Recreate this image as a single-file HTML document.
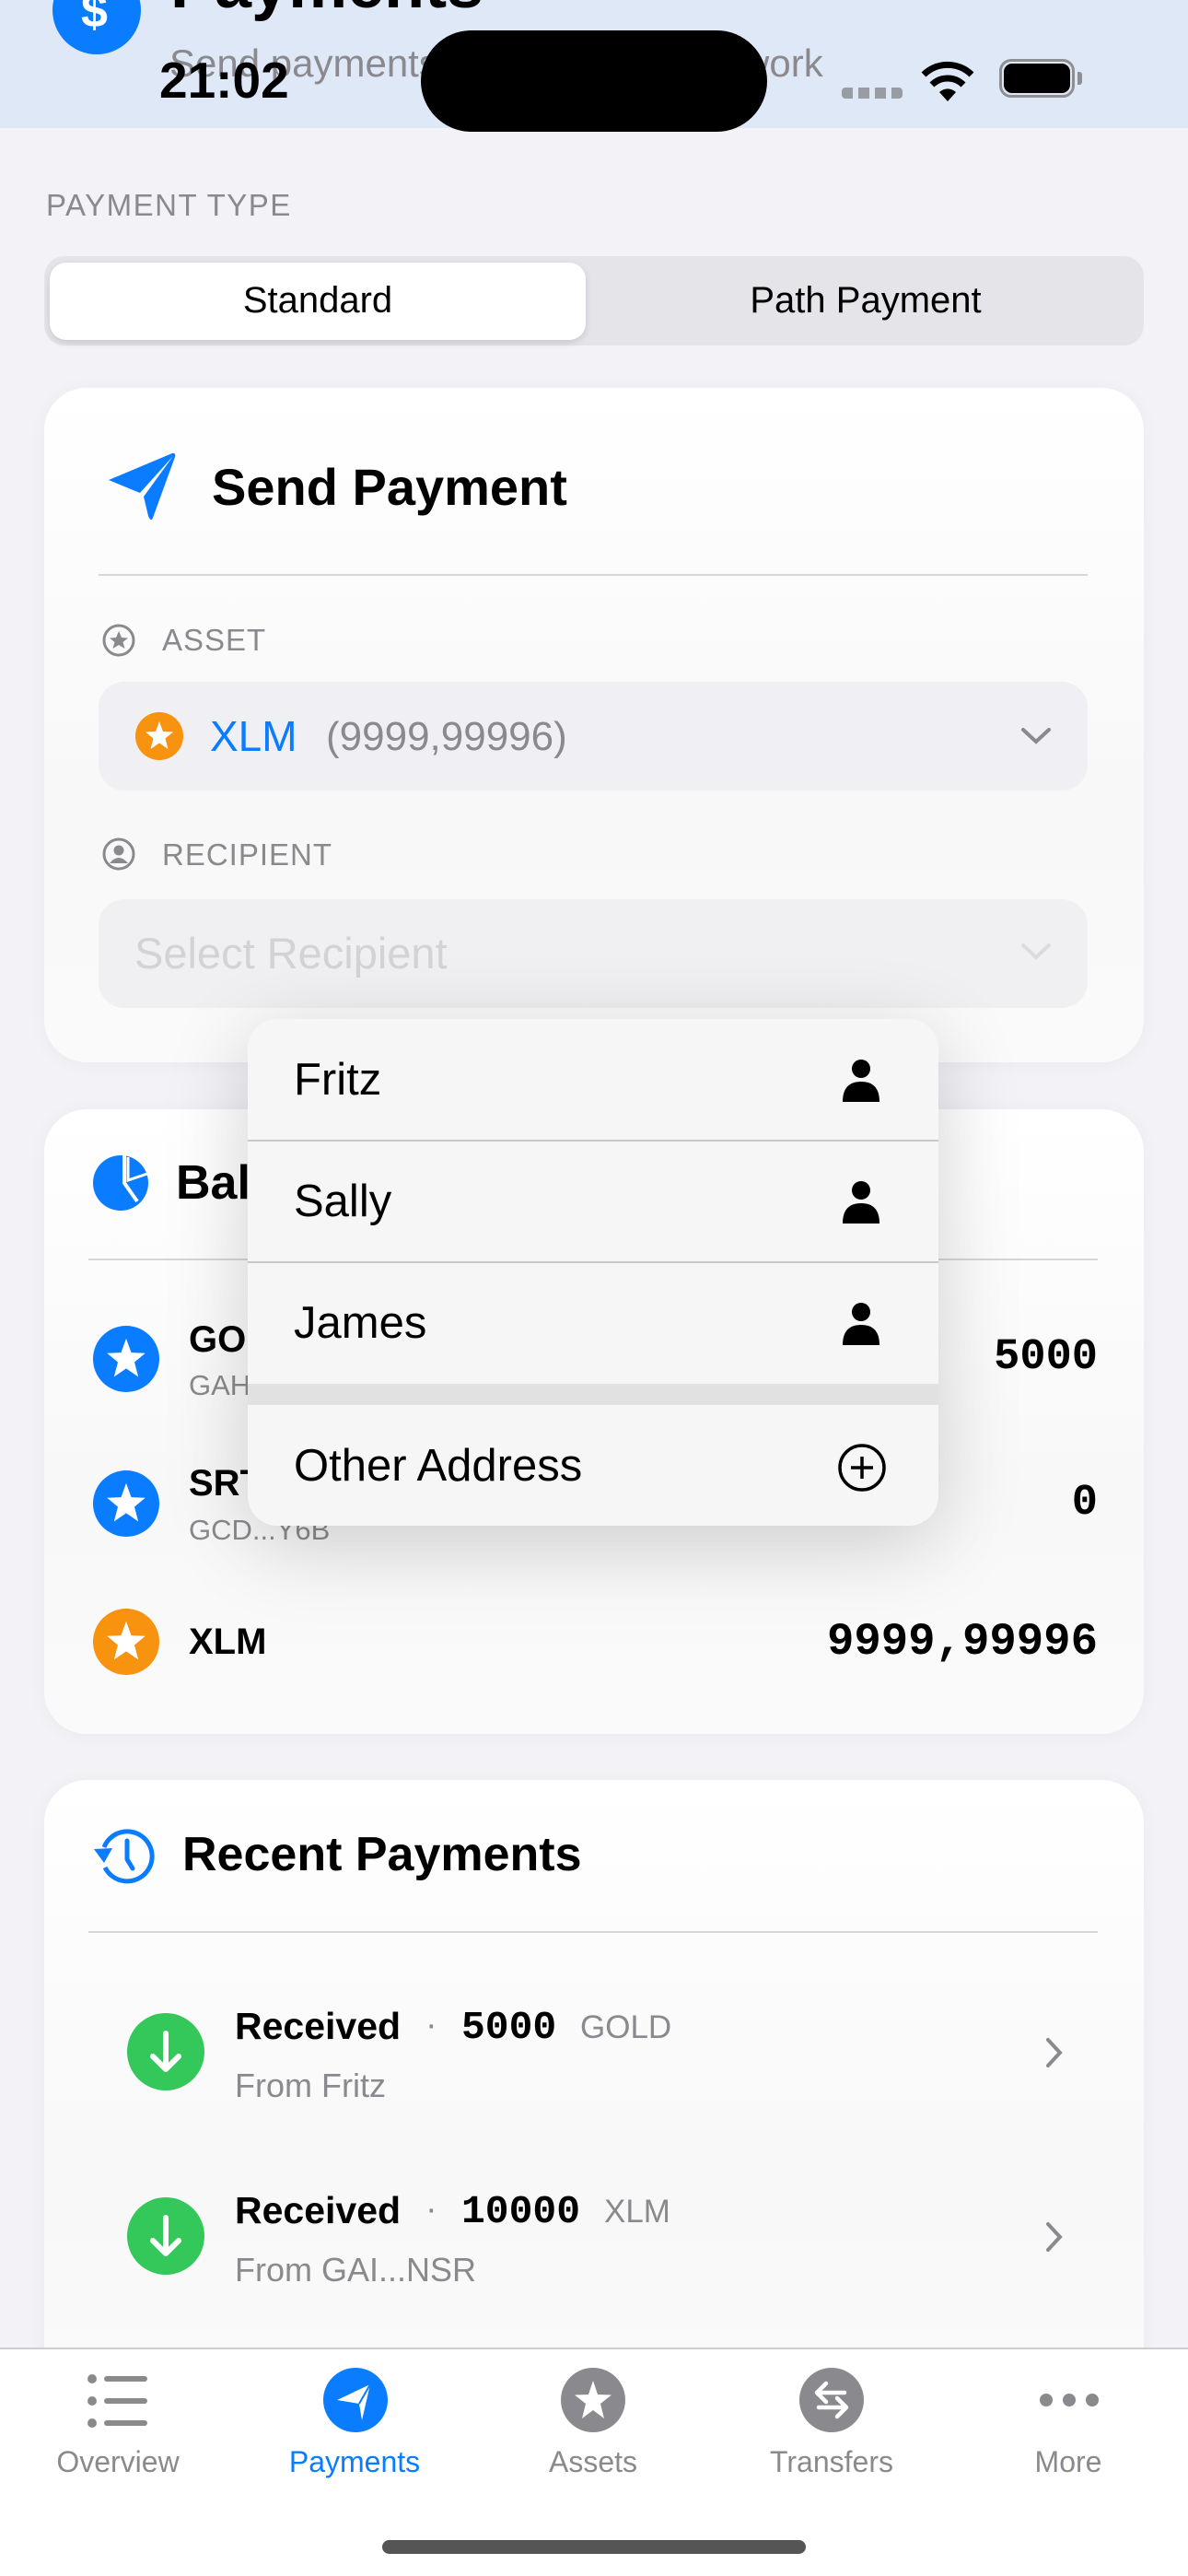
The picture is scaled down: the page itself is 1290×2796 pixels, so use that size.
<!DOCTYPE html>
<html><head><meta charset="utf-8">
<style>
*{margin:0;padding:0;box-sizing:border-box}
body{width:1290px;height:2796px;background:#f2f2f7;font-family:"Liberation Sans",sans-serif;position:relative;overflow:hidden;color:#000}
.a{position:absolute}
.card{position:absolute;left:48px;width:1194px;background:linear-gradient(180deg,#fff,#f8f8f8 60%,#fafafa);border-radius:46px;box-shadow:0 2px 20px rgba(0,0,0,.04)}
.lbl{color:#8a8a8e;font-size:33px;letter-spacing:1px}
.mono{font-family:"Liberation Mono",monospace;font-weight:bold}
.gray{color:#8a8a8e}
.div{position:absolute;height:2px;background:#d6d6d8}
.t{white-space:nowrap;line-height:1}
</style></head><body>

<!-- header -->
<div class="a" style="left:0;top:0;width:1290px;height:139px;background:#dfe8f7"></div>
<div class="a" style="left:57px;top:-37px;width:96px;height:96px;border-radius:50%;background:#0a7cff"></div>
<div class="a t" style="left:88px;top:-14px;color:#fff;font-size:52px;font-weight:bold">$</div>
<div class="a t" style="left:185px;top:-52px;font-size:72px;font-weight:bold">Payments</div>
<div class="a t" style="left:184px;top:48px;font-size:42px;color:#8a8a8e">Send payments on the Stellar network</div>
<div class="a t" style="left:173px;top:60px;font-size:55px;font-weight:bold">21:02</div>
<div class="a" style="left:457px;top:33px;width:376px;height:110px;border-radius:55px;background:#000"></div>
<div class="a" style="left:914px;top:95px;width:66px;height:12px;background:repeating-linear-gradient(90deg,#9a9ca4 0 12px,transparent 12px 18px);border-radius:4px"></div>
<svg class="a" style="left:1000px;top:64px" width="58" height="46" viewBox="0 0 58 46"><path d="M29 46 L20 36 A13 13 0 0 1 38 36 Z" fill="#000"/><path d="M12 28 A24 24 0 0 1 46 28" stroke="#000" stroke-width="7" fill="none"/><path d="M3 17 A37 37 0 0 1 55 17" stroke="#000" stroke-width="7" fill="none"/></svg>
<div class="a" style="left:1085px;top:64px;width:82px;height:42px;border:3px solid #8e8e93;border-radius:13px"></div>
<div class="a" style="left:1090px;top:69px;width:72px;height:32px;background:#000;border-radius:9px"></div>
<div class="a" style="left:1170px;top:78px;width:5px;height:14px;background:#8e8e93;border-radius:0 3px 3px 0"></div>

<div class="a t lbl" style="left:50px;top:206px;letter-spacing:1.5px">PAYMENT TYPE</div>
<div class="a" style="left:48px;top:278px;width:1194px;height:97px;background:#e4e4e9;border-radius:22px"></div>
<div class="a" style="left:54px;top:285px;width:582px;height:84px;background:#fff;border-radius:18px;box-shadow:0 3px 8px rgba(0,0,0,.12)"></div>
<div class="a t" style="left:54px;top:306px;width:582px;text-align:center;font-size:40px">Standard</div>
<div class="a t" style="left:640px;top:306px;width:600px;text-align:center;font-size:40px">Path Payment</div>

<!-- card 1 -->
<div class="card" style="top:421px;height:732px"></div>
<svg class="a" style="left:114px;top:490px" width="80" height="76" viewBox="0 0 80 76"><path d="M4 31 L73 2 Q77 1 76 6 L52 72 Q50 77 47 70 L42 49 L74 5 L38 45 Z" fill="#0a7cff"/></svg>
<div class="a t" style="left:230px;top:501px;font-size:56px;font-weight:bold">Send Payment</div>
<div class="div" style="left:107px;top:623px;width:1074px"></div>
<svg class="a" style="left:110px;top:676px" width="38" height="38" viewBox="0 0 38 38"><circle cx="19" cy="19" r="16" stroke="#8a8a8e" stroke-width="3" fill="none"/><path d="M19 9 L22 16 L29 16.5 L23.5 21 L25.5 28 L19 24 L12.5 28 L14.5 21 L9 16.5 L16 16 Z" fill="#8a8a8e"/></svg>
<div class="a t lbl" style="left:176px;top:678px">ASSET</div>
<div class="a" style="left:107px;top:740px;width:1074px;height:118px;background:#efeff4;border-radius:28px"></div>
<svg class="a" style="left:147px;top:773px" width="52" height="52" viewBox="0 0 52 52"><circle cx="26" cy="26" r="26" fill="#f7930e"/><path d="M26 10 L30 21 L41 21.5 L32.5 28.5 L35.5 40 L26 33.5 L16.5 40 L19.5 28.5 L11 21.5 L22 21 Z" fill="#fff"/></svg>
<div class="a t" style="left:228px;top:776px;font-size:46px;color:#0a7cff">XLM</div>
<div class="a t" style="left:354px;top:778px;font-size:44px;color:#8a8a8e">(9999,99996)</div>
<svg class="a" style="left:1108px;top:788px" width="34" height="22" viewBox="0 0 34 22"><path d="M3 4 L17 17 L31 4" stroke="#8a8a8e" stroke-width="4" fill="none" stroke-linecap="round"/></svg>
<svg class="a" style="left:110px;top:908px" width="38" height="38" viewBox="0 0 38 38"><circle cx="19" cy="19" r="16" stroke="#8a8a8e" stroke-width="3" fill="none"/><circle cx="19" cy="15" r="5.5" fill="#8a8a8e"/><path d="M9 29 Q19 17 29 29 Z" fill="#8a8a8e"/></svg>
<div class="a t lbl" style="left:176px;top:911px">RECIPIENT</div>
<div class="a" style="left:107px;top:976px;width:1074px;height:118px;background:#f0f0f2;border-radius:28px"></div>
<div class="a t" style="left:146px;top:1011px;font-size:47px;color:#d3d3d6">Select Recipient</div>
<svg class="a" style="left:1108px;top:1022px" width="34" height="22" viewBox="0 0 34 22"><path d="M3 4 L17 17 L31 4" stroke="#dcdcdf" stroke-width="4" fill="none" stroke-linecap="round"/></svg>

<!-- card 2 -->
<div class="card" style="top:1204px;height:678px"></div>
<svg class="a" style="left:99px;top:1252px" width="64" height="64" viewBox="0 0 64 64"><circle cx="32" cy="32" r="30" fill="#0a7cff"/><path d="M36 2 L36 32 L50 52" stroke="#fff" stroke-width="4" fill="none"/><path d="M40 4 L40 29 L61 22" stroke="#fff" stroke-width="3" fill="none"/></svg>
<div class="a t" style="left:191px;top:1258px;font-size:52px;font-weight:bold">Balances</div>
<div class="div" style="left:96px;top:1366px;width:1096px"></div>
<svg class="a" style="left:101px;top:1439px" width="72" height="72" viewBox="0 0 52 52"><circle cx="26" cy="26" r="26" fill="#0a7cff"/><path d="M26 10 L30 21 L41 21.5 L32.5 28.5 L35.5 40 L26 33.5 L16.5 40 L19.5 28.5 L11 21.5 L22 21 Z" fill="#fff"/></svg>
<div class="a t" style="left:205px;top:1434px;font-size:40px;font-weight:bold">GOLD</div>
<div class="a t gray" style="left:205px;top:1488px;font-size:31px">GAH...X4F</div>
<div class="a t mono" style="left:900px;top:1450px;width:292px;text-align:right;font-size:47px">5000</div>
<svg class="a" style="left:101px;top:1596px" width="72" height="72" viewBox="0 0 52 52"><circle cx="26" cy="26" r="26" fill="#0a7cff"/><path d="M26 10 L30 21 L41 21.5 L32.5 28.5 L35.5 40 L26 33.5 L16.5 40 L19.5 28.5 L11 21.5 L22 21 Z" fill="#fff"/></svg>
<div class="a t" style="left:205px;top:1590px;font-size:40px;font-weight:bold">SRT</div>
<div class="a t gray" style="left:205px;top:1645px;font-size:31px">GCD...Y6B</div>
<div class="a t mono" style="left:900px;top:1608px;width:292px;text-align:right;font-size:47px">0</div>
<svg class="a" style="left:101px;top:1746px" width="72" height="72" viewBox="0 0 52 52"><circle cx="26" cy="26" r="26" fill="#f7930e"/><path d="M26 10 L30 21 L41 21.5 L32.5 28.5 L35.5 40 L26 33.5 L16.5 40 L19.5 28.5 L11 21.5 L22 21 Z" fill="#fff"/></svg>
<div class="a t" style="left:205px;top:1762px;font-size:40px;font-weight:bold">XLM</div>
<div class="a t mono" style="left:800px;top:1758px;width:392px;text-align:right;font-size:49px">9999,99996</div>

<!-- menu -->
<div class="a" style="left:269px;top:1106px;width:750px;height:550px;background:#f6f6f6;border-radius:32px;box-shadow:0 20px 90px rgba(0,0,0,.18);overflow:hidden">
  <div class="a" style="left:0;top:131px;width:750px;height:2px;background:#c8c8c8"></div>
  <div class="a" style="left:0;top:263px;width:750px;height:2px;background:#c8c8c8"></div>
  <div class="a" style="left:0;top:396px;width:750px;height:23px;background:#e1e1e1"></div>
</div>
<div class="a t" style="left:319px;top:1148px;font-size:49px">Fritz</div>
<div class="a t" style="left:319px;top:1280px;font-size:49px">Sally</div>
<div class="a t" style="left:319px;top:1412px;font-size:49px">James</div>
<div class="a t" style="left:319px;top:1567px;font-size:49px">Other Address</div>
<svg class="a" style="left:913px;top:1148px" width="44" height="48" viewBox="0 0 44 48"><circle cx="22" cy="12" r="10" fill="#000"/><path d="M2 48 Q2 26 22 26 Q42 26 42 48 Z" fill="#000"/></svg>
<svg class="a" style="left:913px;top:1280px" width="44" height="48" viewBox="0 0 44 48"><circle cx="22" cy="12" r="10" fill="#000"/><path d="M2 48 Q2 26 22 26 Q42 26 42 48 Z" fill="#000"/></svg>
<svg class="a" style="left:913px;top:1412px" width="44" height="48" viewBox="0 0 44 48"><circle cx="22" cy="12" r="10" fill="#000"/><path d="M2 48 Q2 26 22 26 Q42 26 42 48 Z" fill="#000"/></svg>
<svg class="a" style="left:909px;top:1566px" width="54" height="54" viewBox="0 0 54 54"><circle cx="27" cy="27" r="24" stroke="#000" stroke-width="3.5" fill="none"/><path d="M27 15 V39 M15 27 H39" stroke="#000" stroke-width="3.5"/></svg>

<!-- card 3 -->
<div class="card" style="top:1932px;height:700px"></div>
<svg class="a" style="left:100px;top:1980px" width="70" height="70" viewBox="0 0 70 70"><path d="M13 25 A27 27 0 1 1 14 47" stroke="#0a7cff" stroke-width="5" fill="none"/><path d="M2 27 L13 42 L22 26 Z" fill="#0a7cff"/><path d="M38 18 V38 L44 48" stroke="#0a7cff" stroke-width="5" fill="none" stroke-linecap="round"/></svg>
<div class="a t" style="left:198px;top:1987px;font-size:52px;font-weight:bold">Recent Payments</div>
<div class="div" style="left:96px;top:2096px;width:1096px"></div>
<svg class="a" style="left:138px;top:2185px" width="84" height="84" viewBox="0 0 84 84"><circle cx="42" cy="42" r="42" fill="#34c759"/><path d="M42 22 V60 M28 47 L42 61 L56 47" stroke="#fff" stroke-width="6" fill="none" stroke-linecap="round" stroke-linejoin="round"/></svg>
<div class="a t" style="left:255px;top:2179px;font-size:41px;font-weight:bold">Received</div>
<div class="a t gray" style="left:462px;top:2179px;font-size:38px">·</div>
<div class="a t mono" style="left:501px;top:2179px;font-size:43px">5000</div>
<div class="a t gray" style="left:630px;top:2183px;font-size:35px">GOLD</div>
<div class="a t gray" style="left:255px;top:2246px;font-size:36px">From Fritz</div>
<svg class="a" style="left:1134px;top:2211px" width="22" height="34" viewBox="0 0 22 34"><path d="M4 3 L17 17 L4 31" stroke="#8a8a8e" stroke-width="4" fill="none" stroke-linecap="round"/></svg>
<svg class="a" style="left:138px;top:2385px" width="84" height="84" viewBox="0 0 84 84"><circle cx="42" cy="42" r="42" fill="#34c759"/><path d="M42 22 V60 M28 47 L42 61 L56 47" stroke="#fff" stroke-width="6" fill="none" stroke-linecap="round" stroke-linejoin="round"/></svg>
<div class="a t" style="left:255px;top:2379px;font-size:41px;font-weight:bold">Received</div>
<div class="a t gray" style="left:462px;top:2379px;font-size:38px">·</div>
<div class="a t mono" style="left:501px;top:2379px;font-size:43px">10000</div>
<div class="a t gray" style="left:656px;top:2383px;font-size:35px">XLM</div>
<div class="a t gray" style="left:255px;top:2446px;font-size:36px">From GAI...NSR</div>
<svg class="a" style="left:1134px;top:2411px" width="22" height="34" viewBox="0 0 22 34"><path d="M4 3 L17 17 L4 31" stroke="#8a8a8e" stroke-width="4" fill="none" stroke-linecap="round"/></svg>

<!-- tab bar -->
<div class="a" style="left:0;top:2548px;width:1290px;height:248px;background:#fff;border-top:2px solid #cfcfd2"></div>
<svg class="a" style="left:92px;top:2570px" width="74" height="70" viewBox="0 0 74 70"><g fill="#8a8a8e"><circle cx="8" cy="12" r="5"/><circle cx="8" cy="36" r="5"/><circle cx="8" cy="60" r="5"/><rect x="21" y="9" width="47" height="6" rx="3"/><rect x="21" y="33" width="47" height="6" rx="3"/><rect x="21" y="57" width="47" height="6" rx="3"/></g></svg>
<svg class="a" style="left:350px;top:2569px" width="72" height="72" viewBox="0 0 72 72"><circle cx="36" cy="36" r="35" fill="#0a7cff"/><path d="M16 36 L52 19 L43 58 L40 40 Z" fill="#fff"/><path d="M40 40 L52 19" stroke="#0a7cff" stroke-width="2"/></svg>
<svg class="a" style="left:608px;top:2569px" width="72" height="72" viewBox="0 0 72 72"><circle cx="36" cy="36" r="35" fill="#8a8a8e"/><path d="M36 15 L41 30 L56 30.5 L44 40 L48 56 L36 47 L24 56 L28 40 L16 30.5 L31 30 Z" fill="#fff"/></svg>
<svg class="a" style="left:867px;top:2569px" width="72" height="72" viewBox="0 0 72 72"><circle cx="36" cy="36" r="35" fill="#8a8a8e"/><path d="M50 28 H22 M30 18 L20 28 L30 38 M22 44 H50 M42 34 L52 44 L42 54" stroke="#fff" stroke-width="4.5" fill="none" stroke-linecap="round" stroke-linejoin="round"/></svg>
<svg class="a" style="left:1126px;top:2594px" width="70" height="22" viewBox="0 0 70 22"><g fill="#8a8a8e"><circle cx="10" cy="11" r="7"/><circle cx="35" cy="11" r="7"/><circle cx="60" cy="11" r="7"/></g></svg>
<div class="a t gray" style="left:28px;top:2656px;width:200px;text-align:center;font-size:32px">Overview</div>
<div class="a t" style="left:285px;top:2656px;width:200px;text-align:center;font-size:32px;color:#0a7cff">Payments</div>
<div class="a t gray" style="left:544px;top:2656px;width:200px;text-align:center;font-size:32px">Assets</div>
<div class="a t gray" style="left:803px;top:2656px;width:200px;text-align:center;font-size:32px">Transfers</div>
<div class="a t gray" style="left:1060px;top:2656px;width:200px;text-align:center;font-size:32px">More</div>
<div class="a" style="left:415px;top:2757px;width:460px;height:15px;border-radius:8px;background:#555"></div>
</body></html>
